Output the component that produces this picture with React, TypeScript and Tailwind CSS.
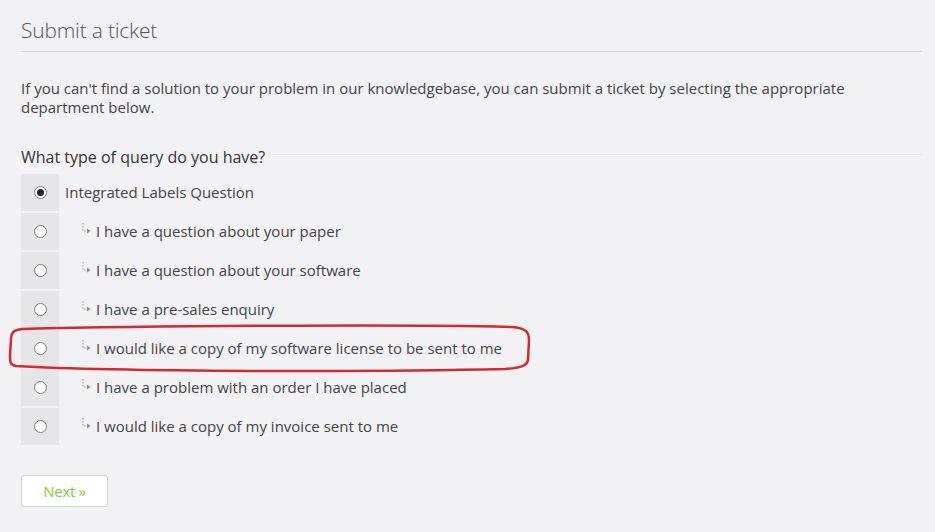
import React, { useState } from "react";

const options = [
  { id: "labels", label: "Integrated Labels Question", sub: false },
  { id: "paper", label: "I have a question about your paper", sub: true },
  { id: "software", label: "I have a question about your software", sub: true },
  { id: "presales", label: "I have a pre-sales enquiry", sub: true },
  { id: "license", label: "I would like a copy of my software license to be sent to me", sub: true },
  { id: "order", label: "I have a problem with an order I have placed", sub: true },
  { id: "invoice", label: "I would like a copy of my invoice sent to me", sub: true },
];

// little dotted "child" arrow in front of sub departments
const SubArrow: React.FC = () => (
  <svg width="12" height="14" viewBox="0 0 12 14" className="shrink-0">
    <path d="M2 1 V9 H6" stroke="#9a9a9a" strokeWidth="1" strokeDasharray="1.5 1.5" fill="none" />
    <path d="M6 6.5 L9.5 9 L6 11.5 Z" fill="#8a8a8a" />
  </svg>
);

const App: React.FC = () => {
  const [selected, setSelected] = useState<string>("labels");

  return (
    <div
      className="bg-[#f2f2f4] min-h-[532px] w-full text-[#444] pl-[21px] pr-[13px] pt-[16px] relative"
      style={{ fontFamily: '"Open Sans", "Noto Sans", sans-serif' }}
    >
      <h1 className="text-[21px] font-light text-[#555] leading-[28px] pb-[7px] border-b border-[#d4d4d6] tracking-[-0.2px]">
        Submit a ticket
      </h1>

      <p className="mt-[27px] text-[15px] leading-[19px] text-[#444] pr-[60px]">
        If you can't find a solution to your problem in our knowledgebase, you can submit a ticket by selecting the appropriate
        department below.
      </p>

      <form className="mt-[29px]" onSubmit={(e) => e.preventDefault()}>
        <div className="flex items-center">
          <span className="text-[16px] leading-[22px] text-[#333] pr-[4px]">What type of query do you have?</span>
          <div className="flex-1 border-t border-[#e6e6e8] mb-[6px]" />
        </div>

        <div className="mt-[6px] flex flex-col gap-[2px]">
          {options.map((o) => (
            <label key={o.id} className="flex items-center h-[37px] cursor-pointer">
              <span className="w-[38px] h-full bg-[#e6e6e8] flex items-center justify-center">
                <span className="w-[13px] h-[13px] rounded-full border border-[#7a7a7a] bg-white flex items-center justify-center">
                  {selected === o.id && <span className="w-[7px] h-[7px] rounded-full bg-[#222]" />}
                </span>
              </span>
              <input
                type="radio"
                name="department"
                className="hidden"
                checked={selected === o.id}
                onChange={() => setSelected(o.id)}
              />
              <span className={`flex items-center text-[15px] text-[#444] ${o.sub ? "pl-[22px]" : "pl-[6px]"}`}>
                {o.sub && (
                  <span className="mr-[3px] -mt-[6px]">
                    <SubArrow />
                  </span>
                )}
                {o.label}
              </span>
            </label>
          ))}
        </div>

        <button
          type="submit"
          className="mt-[30px] w-[87px] h-[32px] bg-white border border-[#cfcfcf] rounded-[3px] text-[15px] leading-[20px] pb-[1px] text-[#8cc43c] tracking-[-0.3px]"
        >
          Next »
        </button>
      </form>

      {/* hand drawn red annotation round the license option */}
      <svg className="absolute left-0 top-0 pointer-events-none" width="935" height="532">
        <path
          d="M22 329 C 150 326, 400 324, 512 327 C 526 328, 529 332, 529 340 L 528 360 C 527 366, 520 368, 505 369 C 380 372, 120 372, 16 366 C 10 365, 10 362, 10 355 L 11 340 C 11 332, 14 330, 22 329 Z"
          stroke="#d42a2f"
          strokeWidth="2.5"
          fill="none"
        />
      </svg>
    </div>
  );
};

export default App;
